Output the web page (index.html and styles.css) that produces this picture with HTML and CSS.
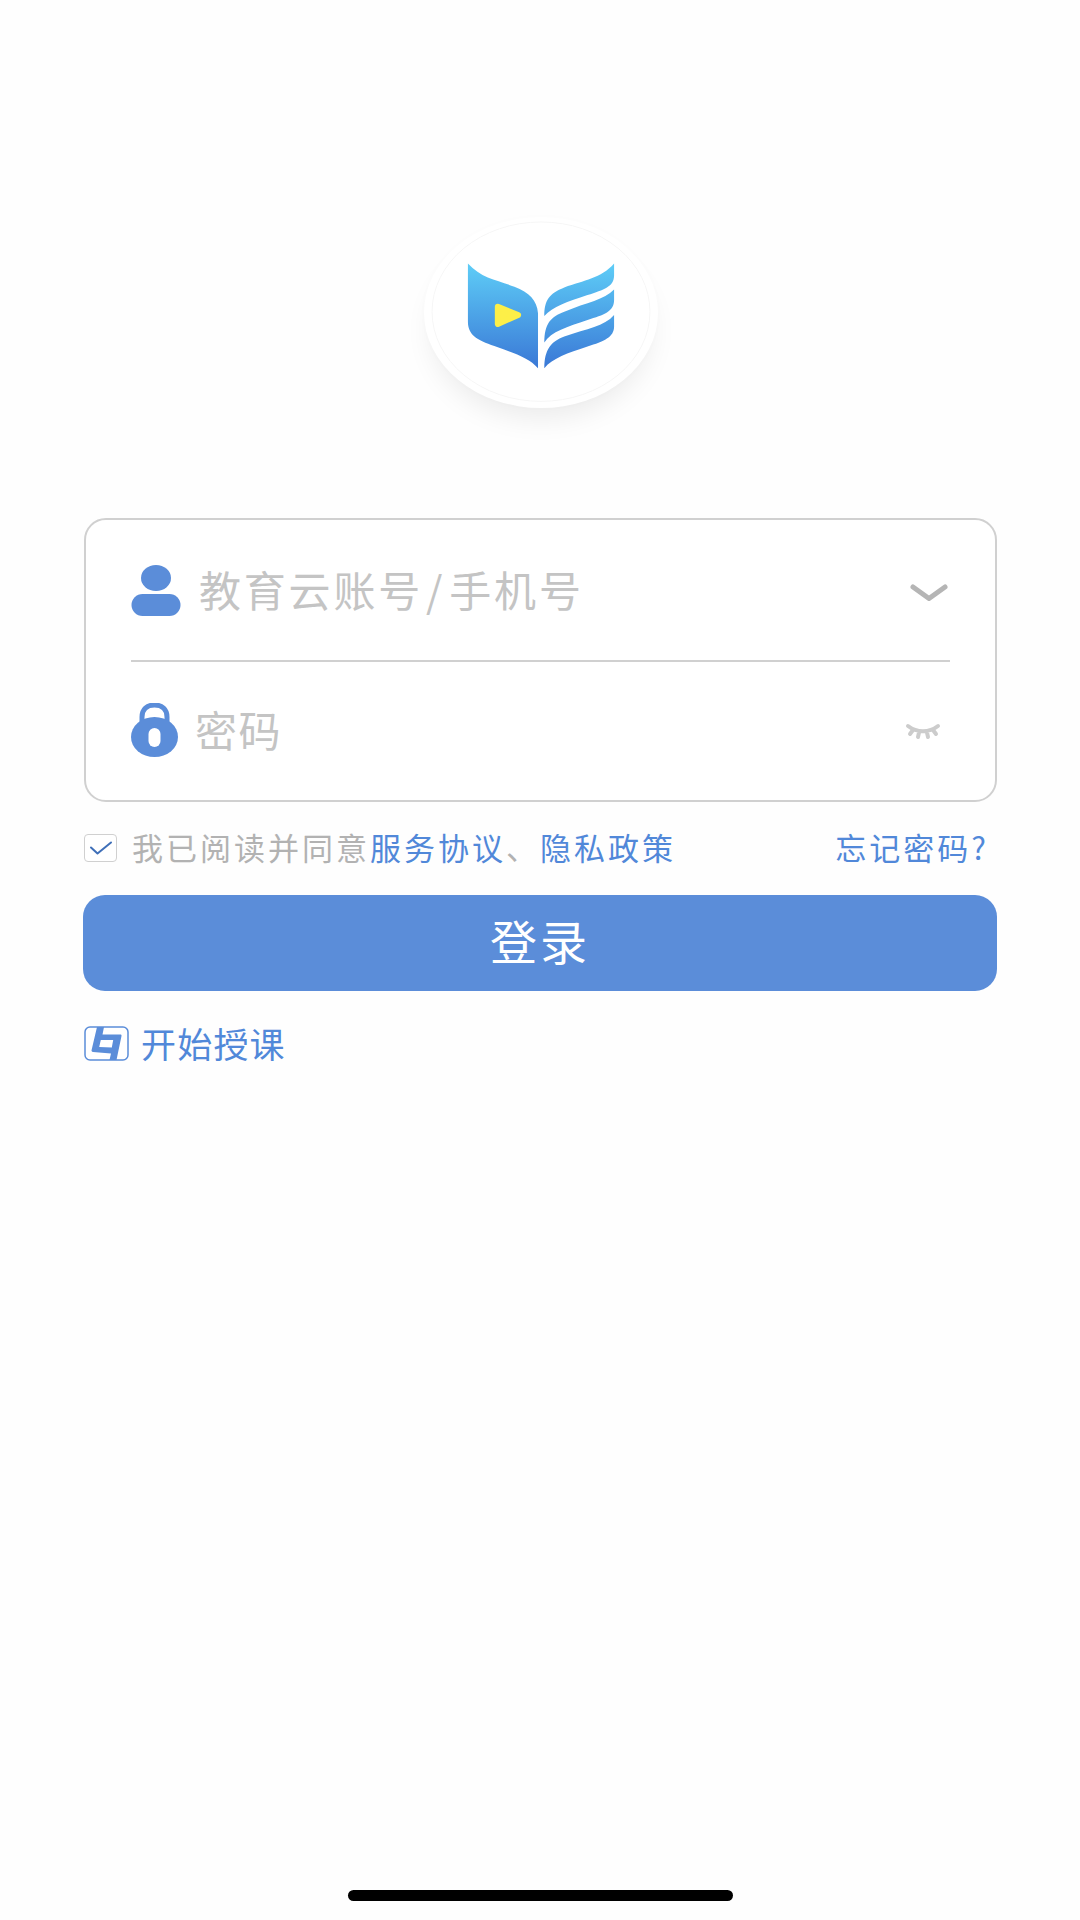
FILE: index.html
```html
<!DOCTYPE html>
<html lang="zh-CN">
<head>
    <meta charset="utf-8">
    <title>登录</title>
    <link rel="stylesheet" href="styles.css">
</head>
<body>
<div class="page">
    <div class="logo">
        <svg width="234" height="191" viewBox="68 50 704 575">
            <defs>
                <linearGradient id="book" gradientUnits="userSpaceOnUse" x1="0" y1="190" x2="0" y2="505">
                    <stop offset="0" stop-color="#5ecdf7"/>
                    <stop offset="1" stop-color="#3a78d6"/>
                </linearGradient>
            </defs>
            <ellipse cx="420" cy="335" rx="328" ry="270" fill="none" stroke="#f6f6f6" stroke-width="3"/>
            <path fill="url(#book)" d="M200 190C240 235 290 240 340 260C385 278 408 300 411 340L411 505C385 475 345 462 290 442C235 422 200 410 200 365Z"/>
            <path fill="url(#book)" d="M640 190C600 235 550 240 490 262C445 280 430 300 430 348C455 320 500 305 560 285C610 268 640 260 640 225Z"/>
            <path fill="url(#book)" d="M640 268C610 300 560 305 490 335C450 350 430 370 430 428C450 395 500 380 560 360C610 345 640 335 640 300Z"/>
            <path fill="url(#book)" d="M640 345C610 380 560 385 490 410C450 425 430 450 430 505C455 475 500 460 560 440C610 425 640 412 640 380Z"/>
            <path fill="#fdef48" stroke="#fdef48" stroke-width="18" stroke-linejoin="round" d="M290 320L351 345L290 372Z"/>
        </svg>
    </div>

    <div class="card">
        <div class="row row_user">
            <svg class="icon_user" width="50" height="54" viewBox="0 0 50 54">
                <ellipse cx="25" cy="13" rx="15" ry="13" fill="#5b8dd9"/>
                <rect x="0.500" y="29" width="49" height="22" rx="11" fill="#5b8dd9"/>
            </svg>
            <span class="hint hint_user">教育云账号<span class="slash">/</span>手机号</span>
            <svg class="icon_arrow" width="38" height="18" viewBox="0 0 38 18">
                <path d="M3 3L19 14.500L35 3" fill="none" stroke="#b5b5b5" stroke-width="5" stroke-linecap="round" stroke-linejoin="round"/>
            </svg>
        </div>
        <div class="line"></div>
        <div class="row row_pass">
            <svg class="icon_lock" width="47" height="54" viewBox="0 0 47 54">
                <path d="M11 20V14C11 6 16 2 23.500 2C31 2 36 6 36 14V20" fill="none" stroke="#5b8dd9" stroke-width="5"/>
                <ellipse cx="23.500" cy="34" rx="23.500" ry="20" fill="#5b8dd9"/>
                <rect x="17.500" y="25" width="12" height="19" rx="6" fill="#fff"/>
            </svg>
            <span class="hint hint_pass">密码</span>
            <svg class="icon_eye" width="36" height="18" viewBox="0 0 36 18">
                <path d="M3 4C12 11 24 11 33 4M8 8L5 12M14 10.500L13 15M22 10.500L23 15M28 8L31 12" fill="none" stroke="#cccccc" stroke-width="4" stroke-linecap="round"/>
            </svg>
        </div>
    </div>

    <div class="agree">
        <span class="check">
            <svg width="24" height="16" viewBox="0 0 24 16">
                <path d="M2 7.500L8.500 13.500L22 2.500" fill="none" stroke="#3f6fb8" stroke-width="2" stroke-linecap="round" stroke-linejoin="round"/>
            </svg>
        </span>
        <span class="agree_text">我已阅读并同意<a href="#">服务协议</a>、<a href="#">隐私政策</a></span>
        <a class="forget" href="#">忘记密码?</a>
    </div>

    <div class="login_btn">登录</div>

    <div class="start">
        <svg width="45" height="35" viewBox="0 0 45 35">
            <rect x="1" y="1" width="43" height="33" rx="5" fill="#fff" stroke="#5b8dd9" stroke-width="1.500"/>
            <path fill="#5b8dd9" fill-rule="evenodd" d="M13 1H20L18.500 8.500H36.500C37.300 8.500 37.700 9 37.500 10L32.500 34H25.500L27 27.500L9 26C7.800 25.900 7.300 25 7.600 24ZM16.800 14L15.200 21L27.800 21.500L29.200 14Z"/>
        </svg>
        <span class="start_text">开始授课</span>
    </div>

    <div class="home_bar"></div>
</div>
</body>
</html>
```

FILE: styles.css
```css
* {
    box-sizing: border-box;
}

body {
    margin: 0;
    background-color: #fefefe;
    font-family: "Noto Sans CJK SC", "Liberation Sans", sans-serif;
    font-weight: 400;
}

a {
    text-decoration: none;
    color: #5188d9;
}

svg {
    display: block;
    flex: none;
}

.page {
    display: flex;
    flex-direction: column;
    height: 1920px;
    padding: 217px 83px 19px 83px;
}

.logo {
    align-self: center;
    width: 234px;
    height: 191px;
    margin-left: 1px;
    border-radius: 50%;
    background-color: #fff;
    box-shadow: 0 18px 28px -8px rgba(0, 0, 0, 0.08), 0 0 6px rgba(0, 0, 0, 0.015);
}

.card {
    margin: 110px 0 0 1px;
    height: 284px;
    padding: 0 45px;
    border: 2px solid #d0d0d0;
    border-radius: 22px;
    background-color: #fff;
}

.row {
    display: flex;
    align-items: center;
}

.row_user {
    height: 140px;
}

.row_pass {
    height: 140px;
}

.line {
    height: 2px;
    background-color: #d0d0d0;
}

.hint {
    color: #c4c4c4;
    font-size: 42px;
    line-height: 48px;
}

.hint_user {
    margin: -2px 0 0 18px;
    letter-spacing: 2.800px;
}

.slash {
    margin: 0 4px 0 3px;
}

.hint_pass {
    margin: -6px 0 0 17px;
    letter-spacing: 1.600px;
}

.icon_user {
    margin-top: 3px;
}

.icon_lock {
    margin-top: -4px;
}

.icon_arrow {
    margin: 6px 2px 0 auto;
}

.icon_eye {
    margin: -3px 9px 0 auto;
}

.agree {
    display: flex;
    align-items: center;
    height: 32px;
    margin-top: 30px;
    font-size: 31px;
    letter-spacing: 3px;
    color: #b2b2b2;
}

.check {
    display: flex;
    align-items: center;
    justify-content: center;
    width: 33px;
    height: 28px;
    margin: 0 15px 0 1px;
    border: 1.500px solid #d0d0d0;
    border-radius: 4px;
    background-color: #fff;
}

.agree_text {
    margin-top: -3px;
}

.forget {
    margin: -3px 8px 0 auto;
    letter-spacing: 3px;
}

.login_btn {
    margin-top: 31px;
    height: 96px;
    line-height: 90px;
    text-align: center;
    border-radius: 22px;
    background-color: #5b8dd9;
    color: #fff;
    font-size: 47px;
    letter-spacing: 3px;
}

.start {
    display: flex;
    align-items: center;
    gap: 12px;
    margin-top: 35px;
    height: 35px;
    padding-left: 1px;
    color: #5188d9;
    font-size: 35px;
    letter-spacing: 1.200px;
}

.start_text {
    margin-top: -2px;
}

.home_bar {
    align-self: center;
    width: 385px;
    height: 11px;
    margin-top: auto;
    border-radius: 6px;
    background-color: #000;
}
```
